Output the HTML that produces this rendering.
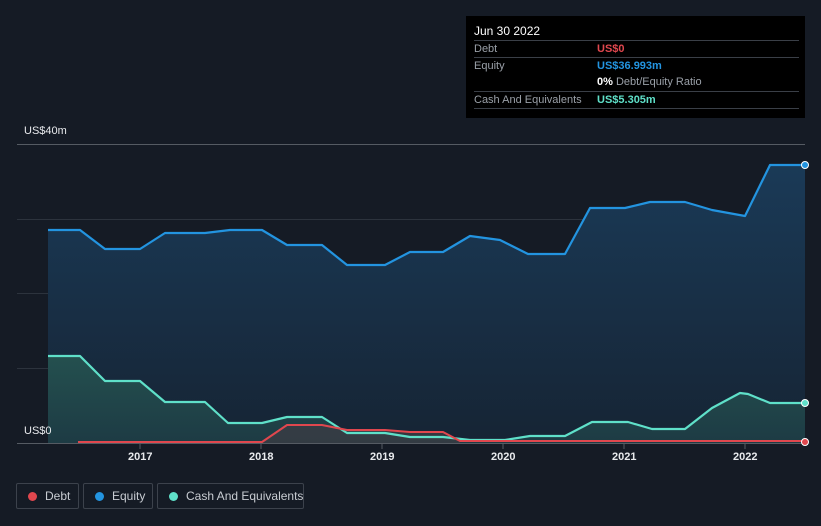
<!DOCTYPE html>
<html><head><style>
body{margin:0;background:#151b25;width:821px;height:526px;overflow:hidden;font-family:"Liberation Sans",sans-serif;position:relative}
.tip{position:absolute;left:466px;top:16px;width:339px;height:102px;background:#000;color:#fff;font-size:11px}
.row{position:absolute;left:8px;width:325px;border-top:1px solid #3a3f47;height:16px;line-height:16px}
.row .l{position:absolute;left:0;color:#9aa0a8;white-space:nowrap}
.row .v{position:absolute;left:123px;font-weight:bold;white-space:nowrap}
.leg{position:absolute;top:483px;height:26px;border:1px solid #3c424c;border-radius:2px;color:#c8ccd2;font-size:12px;line-height:24px;box-sizing:border-box;white-space:nowrap}
.leg i{position:absolute;left:11px;top:8px;width:9px;height:9px;border-radius:50%}
.leg span{position:absolute;left:28px}
.ax{position:absolute;color:#e8eaed;font-size:11px;font-weight:bold}
</style></head><body>
<svg width="821" height="526" style="position:absolute;left:0;top:0">
<defs>
<linearGradient id="ge" x1="0" y1="0" x2="0" y2="1"><stop offset="0" stop-color="#1a3a57"/><stop offset="1" stop-color="#162434"/></linearGradient>
<linearGradient id="gc" x1="0" y1="0" x2="0" y2="1"><stop offset="0" stop-color="#24504f"/><stop offset="1" stop-color="#1d3b44"/></linearGradient>
</defs>
<g stroke="#2c333d" stroke-width="1">
<line x1="17" y1="144.5" x2="805" y2="144.5" stroke="#555b63"/>
<line x1="17" y1="219.5" x2="805" y2="219.5"/>
<line x1="17" y1="293.5" x2="805" y2="293.5"/>
<line x1="17" y1="368.5" x2="805" y2="368.5"/>
</g>
<polygon fill="url(#ge)" points="48,443 48,230 80,230 105,249 140,249 165,233 205,233 230,230 262,230 287,245 322,245 347,265 385,265 410,252 443,252 470,236 500,240 528,254 565,254 590,208 625,208 650,202 685,202 712,210 745,216 770,165 805,165 805,443"/>
<polygon fill="url(#gc)" points="48,443 48,356 80,356 105,381 140,381 165,402 205,402 228,423 262,423 287,417 322,417 347,433 385,433 410,437 443,437 470,440 505,440 530,436 565,436 592,422 628,422 652,429 685,429 712,408 740,393 748,394 770,403 805,403 805,443"/>
<polygon fill="#3a3c44" opacity="0.8" points="262,443 287,425 322,425 347,430 385,430 410,432 443,432 460,440 460,443"/>
<polyline fill="none" stroke="#2394e0" stroke-width="2.2" stroke-linejoin="round" points="48,230 80,230 105,249 140,249 165,233 205,233 230,230 262,230 287,245 322,245 347,265 385,265 410,252 443,252 470,236 500,240 528,254 565,254 590,208 625,208 650,202 685,202 712,210 745,216 770,165 805,165"/>
<polyline fill="none" stroke="#5fe0c9" stroke-width="2.2" stroke-linejoin="round" points="48,356 80,356 105,381 140,381 165,402 205,402 228,423 262,423 287,417 322,417 347,433 385,433 410,437 443,437 470,440 505,440 530,436 565,436 592,422 628,422 652,429 685,429 712,408 740,393 748,394 770,403 805,403"/>
<polyline fill="none" stroke="#e0474e" stroke-width="2" stroke-linejoin="round" points="78,442 262,442 287,425 322,425 347,430 385,430 410,432 443,432 460,441 805,441"/>
<line x1="17" y1="443.5" x2="805" y2="443.5" stroke="#555b63"/>
<g stroke="#555b63"><line x1="140" y1="444" x2="140" y2="449"/><line x1="261" y1="444" x2="261" y2="449"/><line x1="382" y1="444" x2="382" y2="449"/><line x1="503" y1="444" x2="503" y2="449"/><line x1="624" y1="444" x2="624" y2="449"/><line x1="745" y1="444" x2="745" y2="449"/></g>
<circle cx="805" cy="165" r="3.5" fill="#2394e0" stroke="#fff" stroke-width="1"/>
<circle cx="805" cy="403" r="3.5" fill="#5fe0c9" stroke="#fff" stroke-width="1"/>
<circle cx="805" cy="442" r="3.5" fill="#e0474e" stroke="#fff" stroke-width="1"/>
</svg>
<div class="ax" style="left:24px;top:125px;font-weight:normal">US$40m</div>
<div class="ax" style="left:24px;top:425px;font-weight:normal">US$0</div>
<div class="ax" style="left:128px;top:451px">2017</div>
<div class="ax" style="left:249px;top:451px">2018</div>
<div class="ax" style="left:370px;top:451px">2019</div>
<div class="ax" style="left:491px;top:451px">2020</div>
<div class="ax" style="left:612px;top:451px">2021</div>
<div class="ax" style="left:733px;top:451px">2022</div>
<div class="tip">
<div style="position:absolute;left:8px;top:8px;font-size:12px">Jun 30 2022</div>
<div class="row" style="top:24px"><span class="l">Debt</span><span class="v" style="color:#e0474e">US$0</span></div>
<div class="row" style="top:41px"><span class="l">Equity</span><span class="v" style="color:#2394e0">US$36.993m</span></div>
<div class="row" style="top:58px;border-top:none"><span class="v" style="color:#fff">0% <span style="font-weight:normal;color:#9aa0a8">Debt/Equity Ratio</span></span></div>
<div class="row" style="top:75px;border-bottom:1px solid #3a3f47"><span class="l">Cash And Equivalents</span><span class="v" style="color:#5fe0c9">US$5.305m</span></div>
</div>
<div class="leg" style="left:16px;width:63px"><i style="background:#e0474e"></i><span>Debt</span></div>
<div class="leg" style="left:83px;width:70px"><i style="background:#2394e0"></i><span>Equity</span></div>
<div class="leg" style="left:157px;width:147px"><i style="background:#5fe0c9"></i><span>Cash And Equivalents</span></div>
</body></html>
